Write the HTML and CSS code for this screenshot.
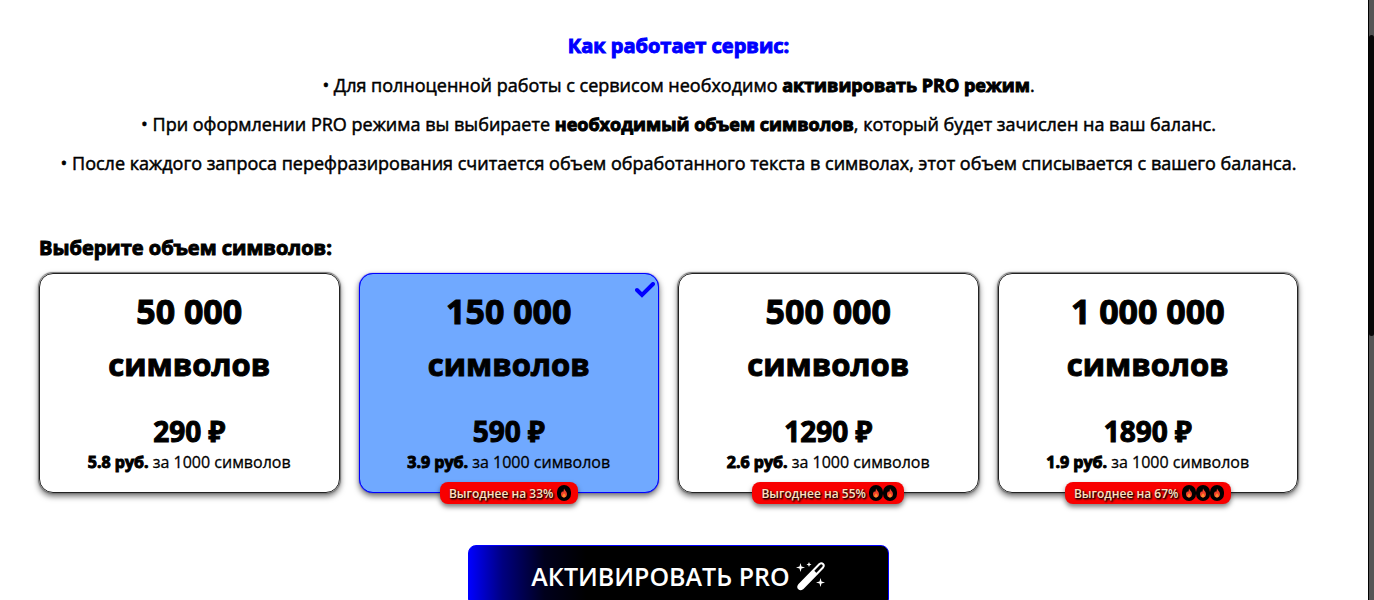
FILE: index.html
```
<!DOCTYPE html>
<html lang="ru">
<head>
<meta charset="utf-8">
<title>Активировать PRO</title>
<link rel="stylesheet" href="styles.css">
</head>
<body>
<svg class="defs">
	<symbol id="fire" viewBox="0 0 12 14">
		<path fill="#f2402a" d="M6 0C6.500 3 10.500 4.500 10.500 9C10.500 12 8.500 14 6 14C3.500 14 1.500 12 1.500 9C1.500 7 2.500 5.500 3.500 4.500L4.500 6C5.500 4.500 6 2.500 6 0Z"/>
		<path fill="#ff8a2e" d="M6 7C6.500 8.500 8.500 9 8.500 11C8.500 12.500 7.500 13.500 6 13.500C4.500 13.500 3.500 12.500 3.500 11C3.500 9.500 5.500 9 6 7Z"/>
	</symbol>
</svg>
<div class="page">
	<div class="content">
		<div class="about">
			<h2>Как работает сервис:</h2>
			<p>• Для полноценной работы с сервисом необходимо <b>активировать PRO режим</b>.</p>
			<p>• При оформлении PRO режима вы выбираете <b>необходимый объем символов</b>, который будет зачислен на ваш баланс.</p>
			<p>• После каждого запроса перефразирования считается объем обработанного текста в символах, этот объем списывается с вашего баланса.</p>
		</div>
		<form>
			<h3>Выберите объем символов:</h3>
			<div class="tariffs">
				<label class="tariff">
					<input type="radio" name="tariff" value="50">
					<span class="count">50 000</span>
					<span class="unit">символов</span>
					<span class="price">290 ₽</span>
					<span class="rate"><b>5.8 руб.</b> за 1000 символов</span>
				</label>
				<label class="tariff active">
					<input type="radio" name="tariff" value="150" checked>
					<svg class="check" viewBox="0 0 20 16"><path d="M2 8L7 13L18 2"/></svg>
					<span class="count">150 000</span>
					<span class="unit">символов</span>
					<span class="price">590 ₽</span>
					<span class="rate"><b>3.9 руб.</b> за 1000 символов</span>
					<span class="sale">Выгоднее на 33% <svg class="fire"><use href="#fire"/></svg></span>
				</label>
				<label class="tariff">
					<input type="radio" name="tariff" value="500">
					<span class="count">500 000</span>
					<span class="unit">символов</span>
					<span class="price">1290 ₽</span>
					<span class="rate"><b>2.6 руб.</b> за 1000 символов</span>
					<span class="sale">Выгоднее на 55% <svg class="fire"><use href="#fire"/></svg><svg class="fire"><use href="#fire"/></svg></span>
				</label>
				<label class="tariff">
					<input type="radio" name="tariff" value="1000">
					<span class="count">1 000 000</span>
					<span class="unit">символов</span>
					<span class="price">1890 ₽</span>
					<span class="rate"><b>1.9 руб.</b> за 1000 символов</span>
					<span class="sale">Выгоднее на 67% <svg class="fire"><use href="#fire"/></svg><svg class="fire"><use href="#fire"/></svg><svg class="fire"><use href="#fire"/></svg></span>
				</label>
			</div>
			<button type="submit" class="pro_button">АКТИВИРОВАТЬ PRO
				<svg class="wand" viewBox="0 0 30 30">
					<path fill="none" stroke="#fff" stroke-width="2" stroke-linejoin="round" d="M3 24L23.500 3Q25.500 1.500 27 3Q28.500 4.500 27 6.500L6.500 27.500Q4.500 29 3 27.500Q1.500 26 3 24Z"/>
					<path fill="#fff" d="M2 25L17.500 9L21.500 13L6 28L2 28Z"/>
					<path fill="#fff" d="M4.500 2L5.500 5.500L9 6.500L5.500 7.500L4.500 11L3.500 7.500L0 6.500L3.500 5.500ZM13 1L13.700 2.800L15.500 3.500L13.700 4.200L13 6L12.300 4.200L10.500 3.500L12.300 2.800ZM24.500 17L25.500 20.500L29 21.500L25.500 22.500L24.500 26L23.500 22.500L20 21.500L23.500 20.500Z"/>
				</svg>
			</button>
		</form>
	</div>
	<div class="scrollbar"><div class="thumb"></div></div>
</div>
</body>
</html>
```
FILE: styles.css
```
* {
	box-sizing: border-box;
}
body {
	margin: 0;
	background: #fff;
	color: #000;
	font-family: "Open Sans", "Noto Sans", sans-serif;
	font-size: 18px;
	overflow: hidden;
}
.defs {
	display: none;
}
.page {
	display: flex;
	height: 100vh;
}
.content {
	flex: 1;
	padding: 31px 50px 0 39px;
}
.about {
	margin: 0 -20px;
	text-align: center;
}
h2, h3 {
	margin: 0;
	font-size: 20px;
	font-weight: 700;
	line-height: 30px;
	-webkit-text-stroke: 1px;
}
h2 {
	color: #00f;
	margin-bottom: 11px;
}
.about p {
	margin: 0 0 12px;
	line-height: 27px;
	-webkit-text-stroke: 0.5px;
}
.about b, .rate b {
	font-weight: 700;
	-webkit-text-stroke: 1px;
}
h3 {
	margin-top: 56px;
	margin-bottom: 10px;
}
.tariffs {
	display: grid;
	grid-template-columns: repeat(4, 1fr);
	gap: 19px;
	margin-right: 20px;
}
.tariff {
	position: relative;
	display: flex;
	flex-direction: column;
	align-items: center;
	height: 220px;
	padding-top: 11px;
	border: 1px solid #222;
	border-radius: 14px;
	box-shadow: 0 0 1px 1px #777, 0 3px 6px rgba(0, 0, 0, 0.6);
	cursor: pointer;
}
.tariff.active {
	background: #70a9ff;
	border-color: #00f;
	box-shadow: 0 0 1px #00f, 0 3px 6px rgba(0, 0, 0, 0.6);
}
.tariff input {
	position: absolute;
	opacity: 0;
}
.check {
	position: absolute;
	top: 8px;
	right: 3px;
	width: 20px;
	height: 16px;
	fill: none;
	stroke: #00f;
	stroke-width: 4;
	stroke-linecap: round;
}
.count, .unit, .price {
	font-weight: 700;
	line-height: 53px;
	-webkit-text-stroke: 1px;
}
.count {
	font-size: 34px;
}
.unit {
	font-size: 31px;
}
.price {
	margin-top: 18px;
	font-size: 28px;
	line-height: 44px;
}
.rate {
	font-size: 16px;
	line-height: 18px;
	-webkit-text-stroke: 0.3px;
}
.sale {
	position: absolute;
	bottom: -12px;
	display: flex;
	align-items: center;
	height: 22px;
	padding: 0 7px 0 9px;
	border-radius: 8px;
	background: #f80000;
	color: #ffe0c0;
	font-size: 12px;
	font-weight: 600;
	white-space: pre;
	text-shadow: 1px 1px 2px #000, 1px 1px 2px #000;
	box-shadow: 0 3px 5px rgba(0, 0, 0, 0.5);
}
.fire {
	width: 14px;
	height: 16px;
	padding: 3px;
	border-radius: 7px;
	background: #000;
}
.pro_button {
	display: flex;
	align-items: center;
	justify-content: center;
	gap: 6px;
	width: 421px;
	height: 62px;
	margin: 52px auto 0;
	border: 1px solid #00f;
	border-radius: 8px;
	background: linear-gradient(90deg, #00f, #000080 8%, #00001c 18%, #000 28%);
	color: #fff;
	font-family: inherit;
	font-size: 25px;
	font-weight: 600;
}
.wand {
	width: 30px;
	height: 30px;
}
.scrollbar {
	width: 6px;
	padding-top: 35px;
	border-left: 1px solid #000;
	background: #555;
}
.thumb {
	height: 301px;
	border-radius: 3px;
	background: #080808;
}
```
